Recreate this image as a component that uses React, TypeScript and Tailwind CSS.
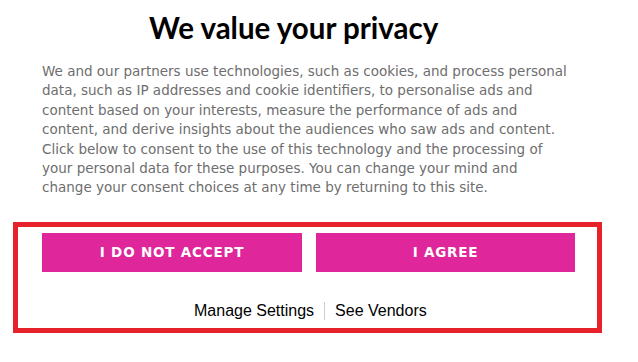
import React from 'react';

const bodyLines = [
  'We and our partners use technologies, such as cookies, and process personal',
  'data, such as IP addresses and cookie identifiers, to personalise ads and',
  'content based on your interests, measure the performance of ads and',
  'content, and derive insights about the audiences who saw ads and content.',
  'Click below to consent to the use of this technology and the processing of',
  'your personal data for these purposes. You can change your mind and',
  'change your consent choices at any time by returning to this site.',
];

export default function App() {
  return (
    <div className="w-[638px] h-[362px] bg-white overflow-hidden">
      {/* Heading */}
      <div className="pt-[10px] pl-[149px] h-[52px]">
        <h1 className="font-['Lato','Liberation_Sans',sans-serif] font-bold text-[29.5px] leading-[36px] text-black whitespace-nowrap">
          We value your privacy
        </h1>
      </div>

      {/* Body copy */}
      <div className="pl-[42px] pt-[10px] font-['DejaVu_Sans','Liberation_Sans',sans-serif] text-[13.5px] leading-[19.4px] text-[#6e6e6e]">
        {bodyLines.map((line) => (
          <div key={line} className="whitespace-nowrap">
            {line}
          </div>
        ))}
      </div>

      {/* Consent actions */}
      <div className="ml-[13px] mt-[24px] w-[589px] h-[111px] border-[5px] border-[#e8222a] flex flex-col">
        <div className="flex gap-[14px] pl-[24px] pt-[6px]">
          <button className="w-[260px] h-[39px] bg-[#df269a] text-white font-['DejaVu_Sans','Liberation_Sans',sans-serif] font-bold text-[13.5px] tracking-[0.8px] uppercase">
            I do not accept
          </button>
          <button className="w-[259px] h-[39px] bg-[#df269a] text-white font-['DejaVu_Sans','Liberation_Sans',sans-serif] font-bold text-[13.5px] tracking-[0.8px] uppercase">
            I agree
          </button>
        </div>
        <div className="flex items-center pl-[176px] pt-[27px] font-['Liberation_Sans',Arial,sans-serif] text-[16px] text-black">
          <span>Manage Settings</span>
          <span className="mx-[10px] w-px h-[18px] bg-[#cccccc]" />
          <span>See Vendors</span>
        </div>
      </div>
    </div>
  );
}
